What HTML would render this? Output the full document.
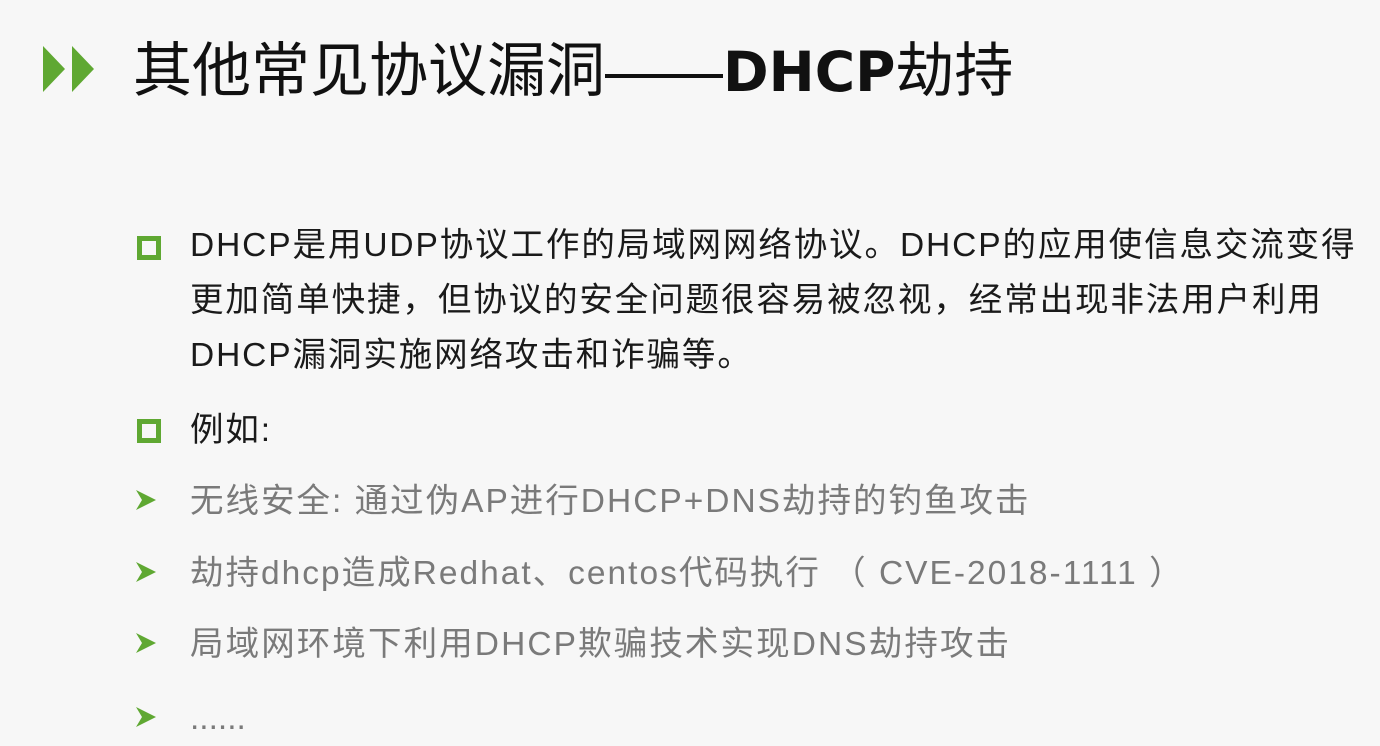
<!DOCTYPE html>
<html><head><meta charset="utf-8"><style>
html,body{margin:0;padding:0}
body{width:1380px;height:739px;overflow:hidden;background:#f7f7f7;position:relative;font-family:"Liberation Sans","Noto Sans CJK SC",sans-serif}
.t{position:absolute;white-space:nowrap}
.title{left:133px;top:33px;font-size:59px;line-height:76px;color:#111;letter-spacing:0}
.title b{font-family:"DejaVu Sans","Noto Sans CJK SC",sans-serif;font-weight:900;font-size:55px}
.sq{position:absolute;left:137px;width:14px;height:14px;border:5px solid #5fa832}
.p{left:190px;font-size:33.5px;color:#1a1a1a;letter-spacing:1.9px;line-height:55px}
.g{color:#7a7a7a}
.ar{position:absolute;left:135px}
</style></head><body>
<svg style="position:absolute;left:43px;top:44px" width="56" height="50"><polygon points="0,2 22,25 0,48" fill="#5fa832"/><polygon points="29,2 51,25 29,48" fill="#5fa832"/></svg>
<div class="t title">其他常见协议漏洞——<b>DHCP</b>劫持</div>

<div class="sq" style="top:236px"></div>
<div class="t p" style="top:218px">DHCP是用UDP协议工作的局域网网络协议。DHCP的应用使信息交流变得<br>更加简单快捷，但协议的安全问题很容易被忽视，经常出现非法用户利用<br>DHCP漏洞实施网络攻击和诈骗等。</div>

<div class="sq" style="top:419px"></div>
<div class="t p" style="top:403px">例如:</div>

<svg class="ar" style="top:489px" width="22" height="22"><polygon points="1,1 21,11 1,21 7,11" fill="#5fa832"/></svg>
<div class="t p g" style="top:474px;letter-spacing:2.0px">无线安全: 通过伪AP进行DHCP+DNS劫持的钓鱼攻击</div>
<svg class="ar" style="top:561px" width="22" height="22"><polygon points="1,1 21,11 1,21 7,11" fill="#5fa832"/></svg>
<div class="t p g" style="top:546px;letter-spacing:2.0px">劫持dhcp造成Redhat、centos代码执行 （ CVE-2018-1111 ）</div>
<svg class="ar" style="top:632px" width="22" height="22"><polygon points="1,1 21,11 1,21 7,11" fill="#5fa832"/></svg>
<div class="t p g" style="top:617px;letter-spacing:2.1px">局域网环境下利用DHCP欺骗技术实现DNS劫持攻击</div>
<svg class="ar" style="top:706px" width="22" height="22"><polygon points="1,1 21,11 1,21 7,11" fill="#5fa832"/></svg>
<div class="t p g" style="top:691px;letter-spacing:0">......</div>
</body></html>
